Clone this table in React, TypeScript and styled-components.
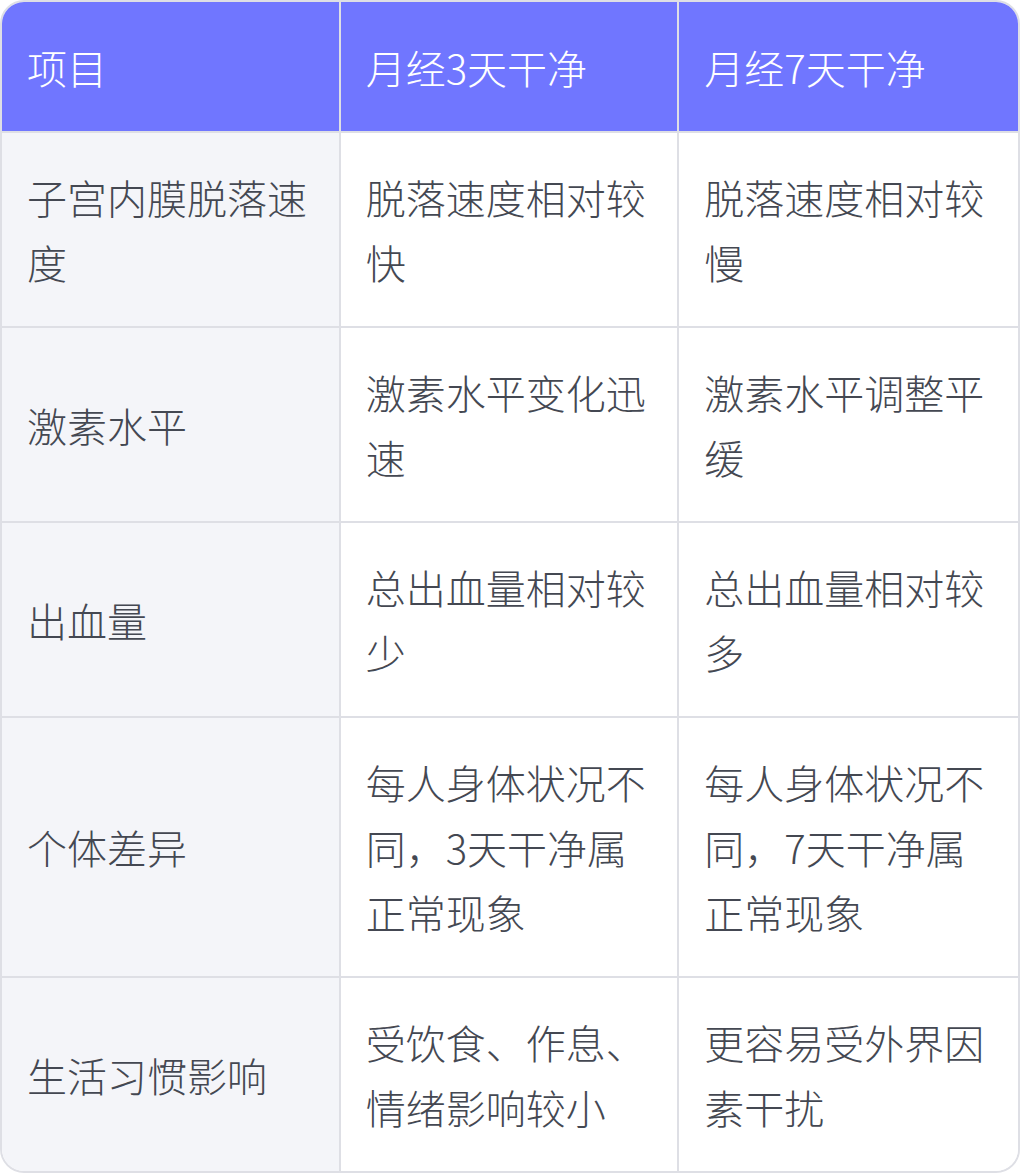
import React from "react";
import styled, { createGlobalStyle } from "styled-components";

const GlobalStyle = createGlobalStyle`
  html, body { margin: 0; padding: 0; background: #ffffff; }
  body { font-family: "Noto Sans CJK SC", "Noto Sans", sans-serif; }
`;

const Table = styled.div`
  width: 1020px;
  box-sizing: border-box;
  border: 2px solid #dedfe5;
  border-radius: 24px;
  overflow: hidden;
  display: grid;
  grid-template-columns: repeat(3, 1fr);
  background: #ffffff;
`;

const Cell = styled.div<{ $head?: boolean; $first?: boolean; $lastCol?: boolean; $lastRow?: boolean }>`
  display: flex;
  align-items: center;
  box-sizing: border-box;
  min-width: 0;
  padding: ${(p) => (p.$head ? "33px 24px 31px 25px" : "32px 24px 31px 25px")};
  font-size: 40px;
  line-height: 65px;
  font-weight: 300;
  color: ${(p) => (p.$head ? "#ffffff" : "#444852")};
  background: ${(p) => (p.$head ? "#7076ff" : p.$first ? "#f4f5f9" : "#ffffff")};
  border-right: ${(p) => (p.$lastCol ? "none" : "2px solid #dedfe5")};
  border-bottom: ${(p) => (p.$lastRow ? "none" : "2px solid #dedfe5")};
  word-break: break-all;
`;

const header = ["项目", "月经3天干净", "月经7天干净"];
const rows: string[][] = [
  ["子宫内膜脱落速度", "脱落速度相对较快", "脱落速度相对较慢"],
  ["激素水平", "激素水平变化迅速", "激素水平调整平缓"],
  ["出血量", "总出血量相对较少", "总出血量相对较多"],
  ["个体差异", "每人身体状况不同，3天干净属正常现象", "每人身体状况不同，7天干净属正常现象"],
  ["生活习惯影响", "受饮食、作息、情绪影响较小", "更容易受外界因素干扰"],
];

export default function App() {
  return (
    <>
      <GlobalStyle />
      <Table>
        {header.map((h, i) => (
          <Cell key={h} $head $lastCol={i === 2}>
            {h}
          </Cell>
        ))}
        {rows.map((r, ri) =>
          r.map((c, ci) => (
            <Cell
              key={`${ri}-${ci}`}
              $first={ci === 0}
              $lastCol={ci === 2}
              $lastRow={ri === rows.length - 1}
            >
              {c}
            </Cell>
          ))
        )}
      </Table>
    </>
  );
}
